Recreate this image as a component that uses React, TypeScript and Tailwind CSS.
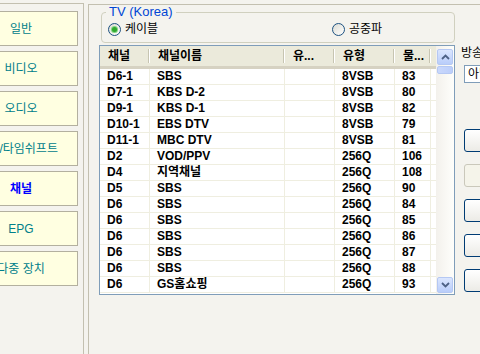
import React from "react";

const tabs = [
  { label: "일반" },
  { label: "비디오" },
  { label: "오디오" },
  { label: "TV/타임쉬프트" },
  { label: "채널", active: true },
  { label: "EPG" },
  { label: "다중 장치" },
];

const channels = [
  ["D6-1", "SBS", "", "8VSB", "83"],
  ["D7-1", "KBS D-2", "", "8VSB", "80"],
  ["D9-1", "KBS D-1", "", "8VSB", "82"],
  ["D10-1", "EBS DTV", "", "8VSB", "79"],
  ["D11-1", "MBC DTV", "", "8VSB", "81"],
  ["D2", "VOD/PPV", "", "256Q", "106"],
  ["D4", "지역채널", "", "256Q", "108"],
  ["D5", "SBS", "", "256Q", "90"],
  ["D6", "SBS", "", "256Q", "84"],
  ["D6", "SBS", "", "256Q", "85"],
  ["D6", "SBS", "", "256Q", "86"],
  ["D6", "SBS", "", "256Q", "87"],
  ["D6", "SBS", "", "256Q", "88"],
  ["D6", "GS홈쇼핑", "", "256Q", "93"],
];

const columns = [
  { title: "채널", w: "w-[50px]" },
  { title: "채널이름", w: "w-[135px]" },
  { title: "유...", w: "w-[50px]" },
  { title: "유형", w: "w-[60px]" },
  { title: "물...", w: "w-[36px]" },
];

const font = "font-['Liberation_Sans','Noto_Sans_CJK_KR',sans-serif]";

function Radio({ checked, label }: { checked?: boolean; label: string }) {
  return (
    <div className="flex items-center gap-[4px]">
      <span className="flex h-[13px] w-[13px] items-center justify-center rounded-full border border-[#1c5180] bg-gradient-to-br from-[#dcdcd4] to-white">
        {checked && (
          <span className="h-[5px] w-[5px] rounded-full bg-[#2fa82f] shadow-[0_0_0_1px_#7fd47f]" />
        )}
      </span>
      <span className="text-[12px] leading-[14px] text-black">{label}</span>
    </div>
  );
}

function ScrollButton({ up }: { up?: boolean }) {
  return (
    <div className="flex h-[16px] w-[16px] items-center justify-center rounded-[2px] border border-[#b5c8f3] bg-gradient-to-b from-[#dbe6fe] to-[#b9cdfa]">
      <svg width="9" height="6" viewBox="0 0 9 6">
        <path
          d={up ? "M1 5 L4.5 1.5 L8 5" : "M1 1 L4.5 4.5 L8 1"}
          fill="none"
          stroke="#4d6185"
          strokeWidth="1.8"
        />
      </svg>
    </div>
  );
}

function XpButton({ disabled }: { disabled?: boolean }) {
  return (
    <div
      className={
        disabled
          ? "h-[23px] w-[75px] rounded-[3px] border border-[#cac8bb] bg-[#f5f4ea]"
          : "h-[23px] w-[75px] rounded-[3px] border border-[#003c74] bg-gradient-to-b from-white to-[#ecebe6]"
      }
    />
  );
}

export default function App() {
  return (
    <div className={`flex h-[354px] w-[480px] overflow-hidden bg-[#f4f3ee] pt-[3px] ${font}`}>
      {/* Left nav */}
      <div className="flex w-[84px] shrink-0 flex-col gap-[5px] overflow-hidden border-t border-r border-[#c3c0b0] pt-[7px]">
        {tabs.map((tab) => (
          <div
            key={tab.label}
            className="-ml-[36px] flex h-[35px] w-[114px] shrink-0 items-center justify-center whitespace-nowrap border border-[#b3b09f] bg-[#ffffe1]"
          >
            <span
              className={
                tab.active
                  ? "text-[12px] font-bold text-[#0000ff]"
                  : "text-[12px] text-[#00808a]"
              }
            >
              {tab.label}
            </span>
          </div>
        ))}
      </div>

      {/* Right page */}
      <div className="ml-[4px] mt-[1px] flex flex-1 flex-col border-t border-l border-[#c3c0b0] pl-[10px]">
        <fieldset className="ml-[2px] w-[354px] rounded-[4px] border border-[#d0d0bf] pb-[6px] pl-[6px]">
          <legend className="-ml-[2px] px-[3px] text-[13px] leading-[14px] text-[#0046d5]">
            TV (Korea)
          </legend>
          <div className="mt-[3px] flex">
            <div className="w-[224px]">
              <Radio checked label="케이블" />
            </div>
            <Radio label="공중파" />
          </div>
        </fieldset>

        <div className="mt-[2px] flex">
          {/* Channel list */}
          <div className="flex h-[250px] w-[356px] shrink-0 border border-[#7f9db9] bg-white">
            <div className="flex flex-1 flex-col">
              <div className="flex h-[23px] border-b-[3px] border-[#d6d2c2] bg-[#ebeadb]">
                {columns.map((c) => (
                  <div key={c.title} className={`${c.w} flex items-center`}>
                    <span className="flex-1 whitespace-nowrap pl-[8px] text-[12px] font-bold text-black">
                      {c.title}
                    </span>
                    <span className="h-[14px] w-[2px] border-l border-r border-l-[#c7c5b2] border-r-white" />
                  </div>
                ))}
              </div>
              {channels.map((row, i) => (
                <div key={i} className="flex h-[16px] border-b border-[#efeee0]">
                  {row.map((cell, j) => (
                    <div
                      key={j}
                      className={`${columns[j].w} whitespace-nowrap border-r border-[#efeee0] pl-[7px] text-[12px] font-bold leading-[15px] text-black`}
                    >
                      {cell}
                    </div>
                  ))}
                </div>
              ))}
            </div>
            {/* Scrollbar */}
            <div className="flex w-[18px] flex-col justify-between bg-gradient-to-r from-[#f3f1ec] to-[#fefefb] px-[1px] pt-[3px] pb-[1px]">
              <div className="flex flex-col gap-[1px]">
                <ScrollButton up />
                <div className="h-[8px] w-[16px] rounded-[2px] border border-[#b5c8f3] bg-gradient-to-r from-[#c9d8fc] to-[#bccefa]" />
              </div>
              <ScrollButton />
            </div>
          </div>

          {/* Right controls */}
          <div className="ml-[6px] flex w-[90px] shrink-0 flex-col">
            <span className="mt-[1px] whitespace-nowrap text-[12px] leading-[14px] text-black">방송 설정</span>
            <div className="ml-[3px] mt-[5px] flex h-[18px] w-[80px] items-center border border-[#7f9db9] bg-white pl-[3px] text-[12px] text-black">
              아날로그
            </div>
            <div className="ml-[3px] mt-[46px] flex flex-col gap-[12px]">
              <XpButton />
              <XpButton disabled />
              <XpButton />
              <XpButton />
              <XpButton />
            </div>
          </div>
        </div>
      </div>
    </div>
  );
}
